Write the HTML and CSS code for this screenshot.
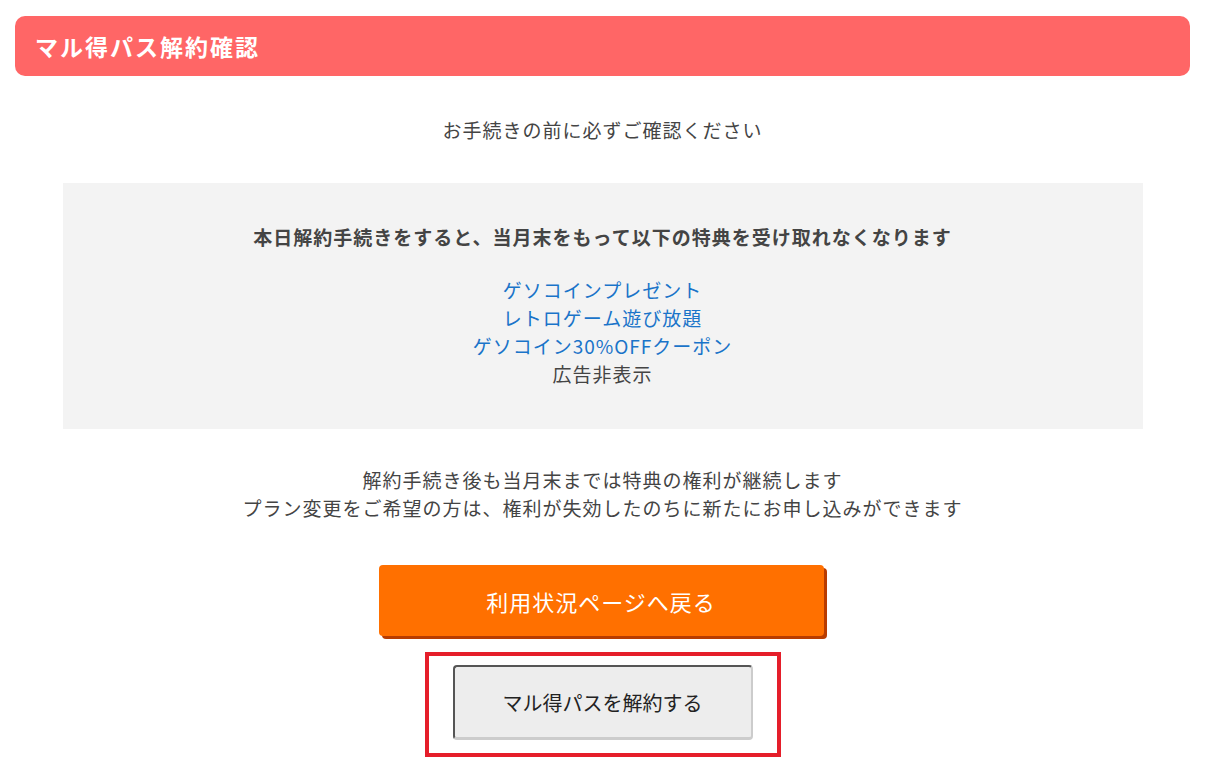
FILE: index.html
```html
<!DOCTYPE html>
<html lang="ja">
<head>
    <meta charset="UTF-8">
    <meta name="viewport" content="width=device-width, initial-scale=1.0">
    <title>マル得パス解約確認</title>
    <link rel="stylesheet" href="styles.css">
</head>
<body>
    <div class="page">
        <h1 class="title">マル得パス解約確認</h1>
        <p class="lead">お手続きの前に必ずご確認ください</p>

        <div class="notice">
            <p class="notice-head">本日解約手続きをすると、当月末をもって以下の特典を受け取れなくなります</p>
            <ul class="perks">
                <li><a href="#">ゲソコインプレゼント</a></li>
                <li><a href="#">レトロゲーム遊び放題</a></li>
                <li><a href="#">ゲソコイン30%OFFクーポン</a></li>
                <li>広告非表示</li>
            </ul>
        </div>

        <p class="info">解約手続き後も当月末までは特典の権利が継続します<br>プラン変更をご希望の方は、権利が失効したのちに新たにお申し込みができます</p>

        <div class="actions">
            <button class="btn-back">利用状況ページへ戻る</button>
            <div class="highlight">
                <button class="btn-cancel">マル得パスを解約する</button>
            </div>
        </div>
    </div>
</body>
</html>
```

FILE: styles.css
```css
body {
    margin: 0;
    background-color: #fff;
    font-family: "Noto Sans CJK JP", "Noto Sans", sans-serif;
    color: #444;
}

.page {
    width: 1175px;
    margin-left: 15px;
    padding-top: 16px;
}

.title {
    margin: 0;
    height: 60px;
    line-height: 60px;
    padding-left: 20px;
    background-color: #ff6666;
    color: #fff;
    font-size: 23px;
    letter-spacing: 2px;
    font-weight: bold;
    border-radius: 10px;
}

.lead {
    margin: 40px 0 0;
    text-align: center;
    font-size: 19px;
    letter-spacing: 1px;
    line-height: 28px;
}

.notice {
    width: 1080px;
    margin: 39px auto 0;
    padding: 40px 0 41px;
    background-color: #f3f3f3;
    text-align: center;
    font-size: 19px;
    letter-spacing: 1px;
}

.notice-head {
    margin: 0;
    font-weight: bold;
    line-height: 28px;
}

.perks {
    list-style: none;
    margin: 25px 0 0;
    padding: 0;
    line-height: 28px;
}

.perks a {
    color: #1a74c9;
    text-decoration: none;
}

.info {
    margin: 37px 0 0;
    text-align: center;
    font-size: 19px;
    letter-spacing: 1px;
    line-height: 28px;
}

.actions {
    display: flex;
    flex-direction: column;
    align-items: center;
    margin-top: 43px;
}

.btn-back {
    width: 445px;
    height: 71px;
    margin-right: 3px;
    background-color: #ff7000;
    color: #fff;
    border: none;
    border-radius: 4px;
    box-shadow: 3px 3px 0 #b83c00;
    font-family: inherit;
    font-size: 22px;
    letter-spacing: 1px;
    cursor: pointer;
}

.highlight {
    margin-top: 16px;
    padding: 9px 24px 13px;
    border: 4px solid #e51e2a;
}

.btn-cancel {
    display: block;
    width: 300px;
    height: 75px;
    background-color: #ededed;
    color: #222;
    border: 2px solid #555;
    border-right-color: #ccc;
    border-bottom: 3px solid #ccc;
    border-radius: 4px;
    font-family: inherit;
    font-size: 20px;
    cursor: pointer;
}
```
